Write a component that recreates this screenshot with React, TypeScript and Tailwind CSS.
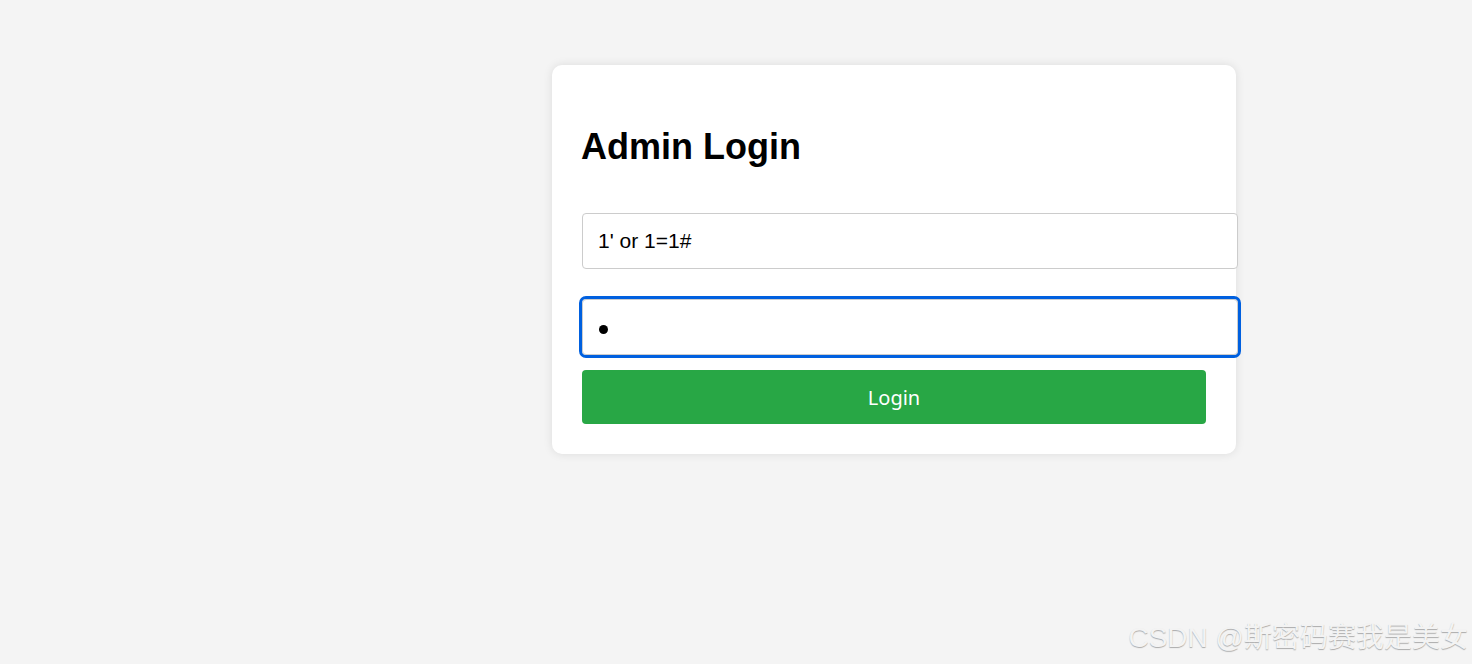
export default function App() {
    return (
        <div className="relative min-h-[664px] w-full bg-[#f4f4f4] pt-[65px] pl-[552px] font-['Liberation_Sans',Arial,sans-serif]">
            {/* login card */}
            <div className="w-[684px] rounded-[10px] bg-white p-[30px] shadow-[0_0_10px_rgba(0,0,0,0.1)]">
                <h2 className="mt-[31px] mb-[46px] -ml-[1px] text-[36px] leading-[41px] font-bold text-black">Admin Login</h2>
                <input
                    readOnly
                    type="text"
                    value="1' or 1=1#"
                    className="block box-content h-[54px] w-[624px] rounded-[4px] border border-[#cccccc] bg-white px-[15px] py-0 text-[21px] text-black outline-none"
                    title="Username"
                />
                {/* password field, focused */}
                <div
                    role="textbox"
                    title="Password"
                    className="mt-[30px] flex box-content h-[54px] w-[624px] items-center rounded-[4px] border border-[#cccccc] bg-white px-[15px] outline-[3px] outline-solid outline-[#0060df] outline-offset-0"
                >
                    <span className="mt-[5px] ml-[1px] block h-[9px] w-[9px] rounded-full bg-black" />
                </div>
                <button className="mt-[15px] block h-[54px] w-[624px] rounded-[4px] pt-[2px] bg-[#28a745] text-[20px] text-white font-['Noto_Sans',sans-serif]">
                    Login
                </button>
            </div>

            {/* watermark */}
            <div className="absolute right-[4px] bottom-[9px] text-[28px] leading-[34px] font-normal text-[#f3f3f3] [text-shadow:0_1px_1px_rgba(0,0,0,0.3)] font-['Liberation_Sans','Noto_Sans_CJK_SC',sans-serif]">
                CSDN @斯密码赛我是美女
            </div>
        </div>
    )
}
